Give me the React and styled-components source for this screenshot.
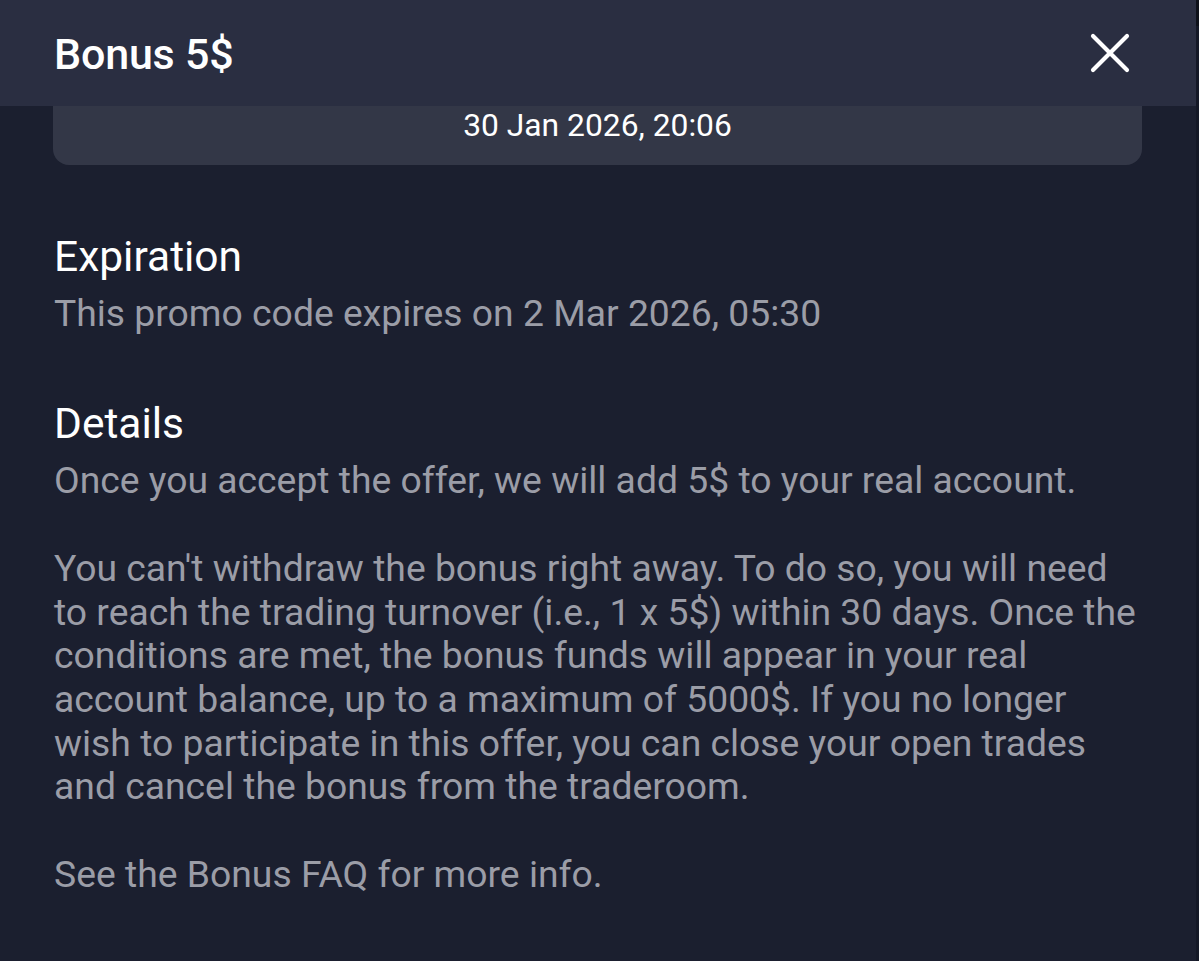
import React from 'react';
import styled, { createGlobalStyle } from 'styled-components';

const GlobalStyle = createGlobalStyle`
  html, body {
    margin: 0;
    padding: 0;
    background: #12151f;
  }
  body {
    font-family: Roboto, "Liberation Sans", Arial, sans-serif;
    -webkit-font-smoothing: antialiased;
  }
`;

const Screen = styled.div`
  display: flex;
  height: 100vh;
  overflow: hidden;
`;

const Panel = styled.div`
  flex: 1;
  display: flex;
  flex-direction: column;
  background: #1b1f2f;
  min-width: 0;
`;

const Edge = styled.div`
  width: 3px;
  display: flex;
  flex-direction: column;
  background: #141826;

  .top {
    height: 26px;
    background: #0e111a;
  }
`;

const Header = styled.header`
  height: 106px;
  flex-shrink: 0;
  display: flex;
  align-items: center;
  justify-content: space-between;
  padding: 0 62px 0 54px;
  background: #2a2e41;
  position: relative;
  z-index: 1;
`;

const Title = styled.h1`
  margin: 0;
  font-size: 43px;
  font-weight: 500;
  color: #ffffff;
  letter-spacing: -0.2px;
  line-height: 1;
  padding-top: 2px;
`;

const CloseButton = styled.button`
  width: 48px;
  height: 48px;
  padding: 0;
  border: none;
  background: transparent;
  cursor: pointer;
  display: flex;
  align-items: center;
  justify-content: center;
`;

const Body = styled.div`
  flex: 1;
  overflow: hidden;
`;

const Content = styled.div`
  margin-top: -26px;
  padding: 0 54px 40px 53px;
`;

const DateCard = styled.div`
  background: #333747;
  border-radius: 16px;
  padding: 24px 20px 17px;
  text-align: center;
  color: #ffffff;
  font-size: 31.8px;
  line-height: 43.7px;
`;

const Section = styled.section`
  margin-top: ${({ $gap }) => $gap}px;
`;

const Heading = styled.h2`
  margin: 0 0 11px 1px;
  font-size: 42.5px;
  font-weight: 400;
  line-height: 49px;
  color: #ffffff;
`;

const Text = styled.p`
  margin: 0 0 43.7px 1px;
  font-size: 37.3px;
  line-height: 43.7px;
  color: #9b9da7;

  &:last-child {
    margin-bottom: 0;
  }
`;

export default function App() {
  return (
    <>
      <GlobalStyle />
      <Screen>
        <Panel>
          <Header>
            <Title>Bonus 5$</Title>
            <CloseButton aria-label="Close">
              <svg width="48" height="48" viewBox="0 0 48 48" fill="none">
                <path d="M7 7L41 41M41 7L7 41" stroke="#ffffff" strokeWidth="4.2" strokeLinecap="round" />
              </svg>
            </CloseButton>
          </Header>
          <Body>
            <Content>
              <DateCard>30 Jan 2026, 20:06</DateCard>

              <Section $gap={67}>
                <Heading>Expiration</Heading>
                <Text>This promo code expires on 2 Mar 2026, 05:30</Text>
              </Section>

              <Section $gap={64}>
                <Heading>Details</Heading>
                <Text>Once you accept the offer, we will add 5$ to your real account.</Text>
                <Text>
                  You can't withdraw the bonus right away. To do so, you will need to reach the
                  trading turnover (i.e., 1 x 5$) within 30 days. Once the conditions are met, the
                  bonus funds will appear in your real account balance, up to a maximum of 5000$.
                  If you no longer wish to participate in this offer, you can close your open
                  trades and cancel the bonus from the traderoom.
                </Text>
                <Text>See the Bonus FAQ for more info.</Text>
              </Section>
            </Content>
          </Body>
        </Panel>
        <Edge>
          <div className="top" />
        </Edge>
      </Screen>
    </>
  );
}
